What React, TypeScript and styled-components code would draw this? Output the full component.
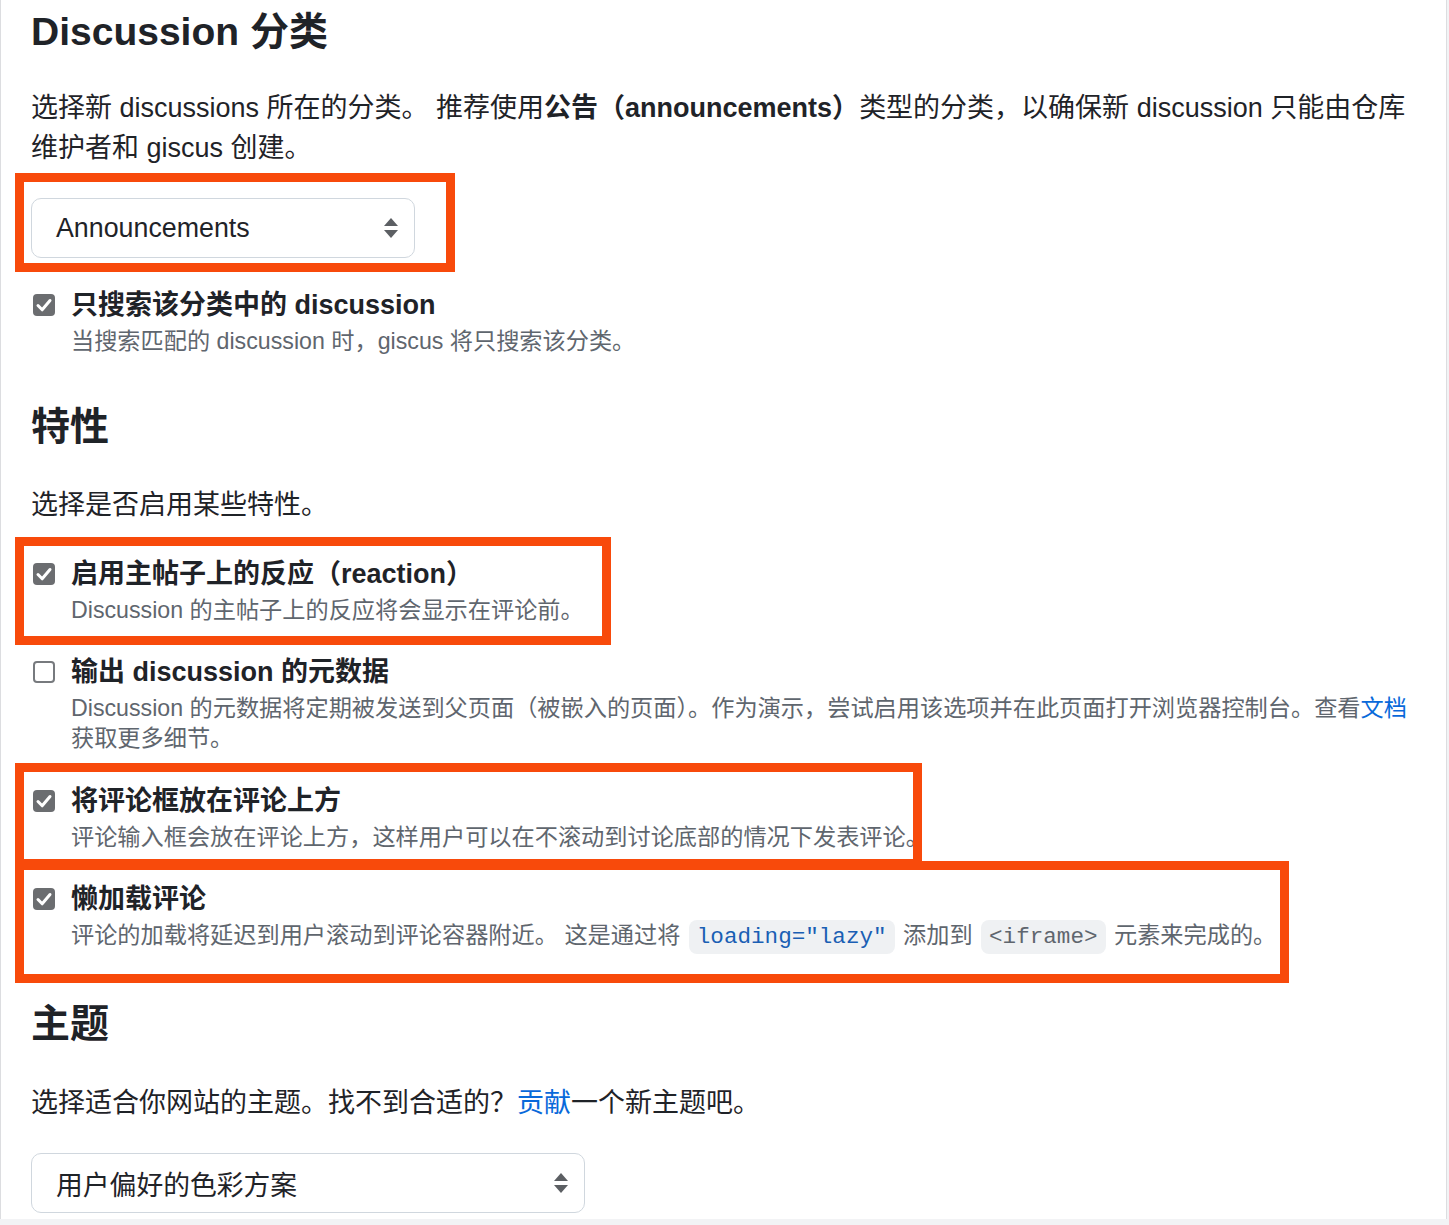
import React from "react";
import styled, { createGlobalStyle } from "styled-components";

const GlobalStyle = createGlobalStyle`
  html, body { margin: 0; padding: 0; background: #f2f3f5; }
  body {
    font-family: "Liberation Sans", "Noto Sans CJK SC", sans-serif;
    color: #24292f;
  }
`;

const Card = styled.main`
  box-sizing: border-box;
  width: 1447px;
  background: #ffffff;
  border-left: 1px solid #dcdde0;
  border-right: 1px solid #dcdde0;
  padding: 7px 27px 6px 30px;
`;

const Heading = styled.h2<{ $top?: number }>`
  margin: ${(p) => p.$top ?? 0}px 0 0;
  font-size: 39px;
  line-height: 50px;
  font-weight: 700;
  color: #1f2328;
`;

const Para = styled.p<{ $top?: number }>`
  margin: ${(p) => p.$top ?? 31}px 0 0;
  font-size: 27px;
  line-height: 40px;
  color: #1f2328;
`;

const Link = styled.a`
  color: #0969da;
  text-decoration: none;
`;

const Field = styled.div<{ $width: number; $top: number }>`
  position: relative;
  width: ${(p) => p.$width}px;
  margin-top: ${(p) => p.$top}px;
`;

const SelectBox = styled.div`
  box-sizing: border-box;
  height: 60px;
  display: flex;
  align-items: center;
  justify-content: space-between;
  padding: 0 16px 0 24px;
  border: 1px solid #d0d7de;
  border-radius: 10px;
  background: #ffffff;
  font-size: 26.8px;
  color: #1f2328;
`;

const Annotation = styled.div<{ $t: number; $l: number; $w: number; $h: number }>`
  position: absolute;
  box-sizing: border-box;
  top: ${(p) => p.$t}px;
  left: ${(p) => p.$l}px;
  width: ${(p) => p.$w}px;
  height: ${(p) => p.$h}px;
  border: 9px solid #f84a0b;
  pointer-events: none;
`;

const Row = styled.div<{ $top?: number }>`
  position: relative;
  display: flex;
  align-items: flex-start;
  margin-top: ${(p) => p.$top ?? 28}px;
`;

const Box = styled.span<{ $checked: boolean }>`
  flex: none;
  box-sizing: border-box;
  width: 22px;
  height: 22px;
  margin: 9px 16px 0 2px;
  border-radius: 4px;
  display: flex;
  align-items: center;
  justify-content: center;
  background: ${(p) => (p.$checked ? "#6b6d70" : "#ffffff")};
  border: ${(p) => (p.$checked ? "none" : "2px solid #777a7e")};
`;

const RowBody = styled.div`
  flex: 1;
  min-width: 0;
`;

const Label = styled.div`
  font-size: 27px;
  line-height: 40px;
  font-weight: 700;
  color: #1f2328;
`;

const Desc = styled.p`
  margin: 1px 0 0;
  font-size: 23.2px;
  line-height: 30px;
  color: #5f666e;
`;

const Code = styled.code<{ $link?: boolean }>`
  font-family: "Liberation Mono", monospace;
  font-size: 22.6px;
  line-height: 30px;
  padding: 4px 8px;
  margin: 0 2px;
  border-radius: 8px;
  background: #eff1f3;
  color: ${(p) => (p.$link ? "#1a5fb4" : "#5f666e")};
`;

const Arrows = () => (
  <svg width="14" height="22" viewBox="0 0 14 22" aria-hidden>
    <path d="M0 9 L7 1 L14 9 Z" fill="#5c5f63" />
    <path d="M0 13 L7 21 L14 13 Z" fill="#5c5f63" />
  </svg>
);

const Check = ({ checked }: { checked: boolean }) => (
  <Box $checked={checked}>
    {checked && (
      <svg width="22" height="22" viewBox="0 0 22 22" aria-hidden>
        <path
          d="M5 11.5 L9.2 15.8 L17 6.5"
          fill="none"
          stroke="#ffffff"
          strokeWidth="3"
          strokeLinecap="round"
          strokeLinejoin="round"
        />
      </svg>
    )}
  </Box>
);

type OptionProps = {
  checked: boolean;
  label: React.ReactNode;
  children: React.ReactNode;
  top?: number;
  mark?: { t: number; l: number; w: number; h: number };
};

const Option = ({ checked, label, children, top, mark }: OptionProps) => (
  <Row $top={top}>
    <Check checked={checked} />
    <RowBody>
      <Label>{label}</Label>
      <Desc>{children}</Desc>
    </RowBody>
    {mark && <Annotation $t={mark.t} $l={mark.l} $w={mark.w} $h={mark.h} />}
  </Row>
);

export default function App() {
  return (
    <>
      <GlobalStyle />
      <Card>
        <Heading>Discussion 分类</Heading>
        <Para>
          选择新 discussions 所在的分类。 推荐使用
          <strong>公告（announcements）</strong>
          类型的分类，以确保新 discussion 只能由仓库维护者和 giscus 创建。
        </Para>
        <Field $width={384} $top={30}>
          <SelectBox>
            <span>Announcements</span>
            <Arrows />
          </SelectBox>
          <Annotation $t={-25} $l={-16} $w={440} $h={99} />
        </Field>
        <Option checked top={27} label="只搜索该分类中的 discussion">
          当搜索匹配的 discussion 时，giscus 将只搜索该分类。
        </Option>

        <Heading $top={46}>特性</Heading>
        <Para $top={33}>选择是否启用某些特性。</Para>

        <Option
          checked
          top={29}
          label="启用主帖子上的反应（reaction）"
          mark={{ t: -17, l: -16, w: 596, h: 108 }}
        >
          Discussion 的主帖子上的反应将会显示在评论前。
        </Option>
        <Option checked={false} top={27} label="输出 discussion 的元数据">
          Discussion 的元数据将定期被发送到父页面（被嵌入的页面）。作为演示，尝试启用该选项并在此页面打开浏览器控制台。查看
          <Link href="#">文档</Link>获取更多细节。
        </Option>
        <Option
          checked
          label="将评论框放在评论上方"
          mark={{ t: -18, l: -16, w: 907, h: 105 }}
        >
          评论输入框会放在评论上方，这样用户可以在不滚动到讨论底部的情况下发表评论。
        </Option>
        <Option
          checked
          top={27}
          label="懒加载评论"
          mark={{ t: -18, l: -16, w: 1274, h: 122 }}
        >
          评论的加载将延迟到用户滚动到评论容器附近。 这是通过将{" "}
          <Code $link>loading="lazy"</Code> 添加到 <Code>&lt;iframe&gt;</Code>{" "}
          元素来完成的。
        </Option>

        <Heading $top={47}>主题</Heading>
        <Para $top={34}>
          选择适合你网站的主题。找不到合适的？<Link href="#">贡献</Link>一个新主题吧。
        </Para>
        <Field $width={554} $top={30}>
          <SelectBox>
            <span>用户偏好的色彩方案</span>
            <Arrows />
          </SelectBox>
        </Field>
      </Card>
    </>
  );
}
